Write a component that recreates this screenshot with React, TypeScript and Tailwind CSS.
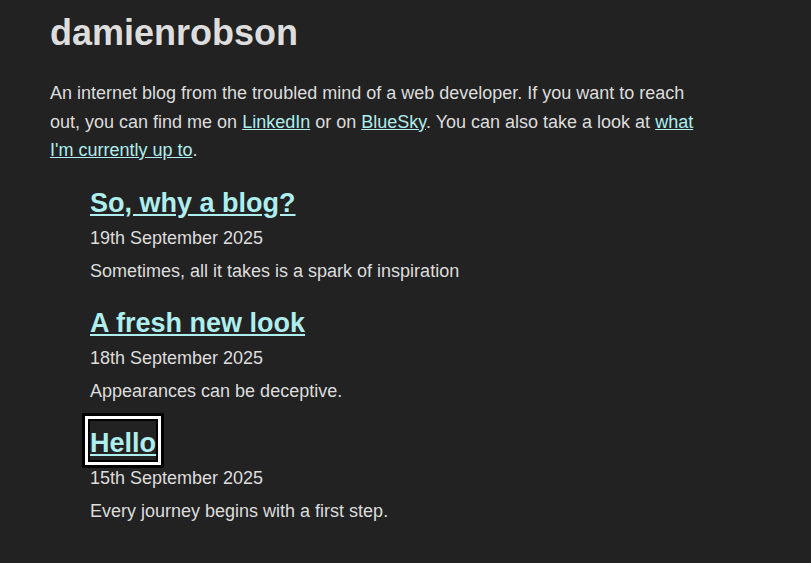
const posts = [
  { title: "So, why a blog?", date: "19th September 2025", summary: "Sometimes, all it takes is a spark of inspiration" },
  { title: "A fresh new look", date: "18th September 2025", summary: "Appearances can be deceptive." },
  { title: "Hello", date: "15th September 2025", summary: "Every journey begins with a first step.", focused: true },
];

const App = () => {
  return (
    <main className="min-h-screen bg-[#222222] px-[50px] pb-10 font-['Liberation_Sans',Arial,sans-serif] text-[#dddddd]">
      <h1 className="pt-[11px] text-[36px] font-bold leading-[43px]">damienrobson</h1>

      <p className="mt-[25px] w-[660px] text-[18px] leading-[28.5px]">
        An internet blog from the troubled mind of a web developer. If you want to reach out, you can find me on{" "}
        <a href="#" className="text-[#afeeee] underline">LinkedIn</a> or on{" "}
        <a href="#" className="text-[#afeeee] underline">BlueSky</a>. You can also take a look at{" "}
        <a href="#" className="text-[#afeeee] underline">what I'm currently up to</a>.
      </p>

      <ul className="mt-[21px] flex flex-col gap-5 pl-10">
        {posts.map((post) => (
          <li key={post.title} className="flex flex-col">
            <h2 className="text-[27px] font-bold leading-[35px]">
              <a
                href="#"
                className={
                  post.focused
                    ? "pt-[7px] pb-[2px] text-[#afeeee] underline shadow-[0_0_0_2px_#000,0_0_0_5px_#fff,0_0_0_8px_#000]"
                    : "text-[#afeeee] underline"
                }
              >
                {post.title}
              </a>
            </h2>
            <p className="mt-[3px] text-[18px] leading-[29px]">{post.date}</p>
            <p className="mt-1 text-[18px] leading-[29px]">{post.summary}</p>
          </li>
        ))}
      </ul>
    </main>
  );
};

export default App;
